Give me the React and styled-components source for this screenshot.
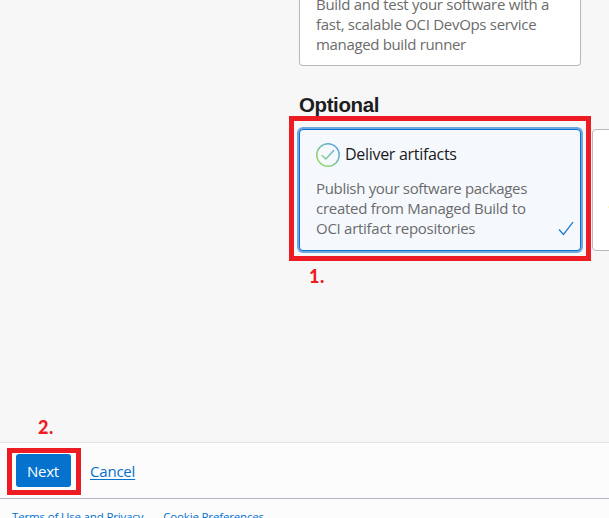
import React from 'react';
import styled, { createGlobalStyle } from 'styled-components';

const Global = createGlobalStyle`
  * { box-sizing: border-box; }
  body { margin: 0; background: #f7f7f7; font-family: "Open Sans", "Noto Sans", sans-serif; }
`;
const Page = styled.div`
  width: 609px; height: 518px; overflow: hidden;
  display: flex; flex-direction: column;
`;
const Content = styled.main`
  height: 442px; flex: none; padding-left: 299px; position: relative; overflow: hidden;
`;
const CardRow = styled.div`
  display: flex; gap: 11px;
`;
const Card = styled.section`
  width: 282px; height: 122px; flex: none; padding: 13px 16px 0;
  border: 1px solid ${p => (p.$selected ? '#0572ce' : '#b6b9be')};
  border-radius: 4px;
  background: ${p => (p.$selected ? '#f5f9fe' : '#fff')};
  box-shadow: ${p => (p.$selected ? '0 0 0 2px #73a5df' : 'none')};
  position: relative;
`;
const ClippedCard = styled(Card)`
  height: 66px; padding: 0 16px 11px; border-top: 0; border-radius: 0 0 4px 4px;
  display: flex; align-items: flex-end;
`;
const Description = styled.div`
  color: #6b6b6b; font-size: 15px; line-height: 20px;
`;
const Line = styled.div`
  white-space: nowrap; width: max-content; letter-spacing: ${p => p.$spacing || 0}px;
`;
const Heading = styled.h2`
  margin: 26px 0 9px; height: 28px; letter-spacing: -0.4px;
  font: bold 20.5px/25px "Liberation Sans", Arial, sans-serif; color: #1d1d1d;
`;
const CardTitle = styled.div`
  display: flex; align-items: center; gap: 5px; height: 24px; margin-bottom: 11px;
  font-size: 16px; line-height: 24px; color: #1a1a1a;
  svg { display: block; flex: none; }
`;
const TitleText = styled.span`
  margin-top: -3px; white-space: nowrap; letter-spacing: -0.3px;
`;
const Tick = styled.svg`
  position: absolute; right: 6px; bottom: 14px;
`;
const Dot = styled.i`
  position: absolute; left: 15px; top: 76px; width: 1px; height: 2px; background: #fff6c4;
`;
const Outline = styled.div`
  position: absolute; border: 5px solid #ed1c24;
  left: ${p => p.$x}px; top: ${p => p.$y}px; width: ${p => p.$w}px; height: ${p => p.$h}px;
  pointer-events: none;
`;
const StepMark = styled.span`
  position: absolute; left: ${p => p.$x}px; top: ${p => p.$y}px;
  color: #ed1c24; font: 900 18px/22px Lato, "Open Sans", sans-serif; letter-spacing: 0.5px;
`;
const ActionBar = styled.div`
  height: 57px; flex: none; display: flex; align-items: flex-start; gap: 19px;
  padding: 11px 16px 0; background: #fcfcfc;
  border-top: 1px solid #e4e4e4; border-bottom: 1px solid #b1b7c0;
  position: relative;
`;
const NextButton = styled.button`
  width: 55px; height: 33px; padding: 1px 1px 0 0; border: 0; border-radius: 3px;
  background: #0572ce; color: #fff; font: 15px/32px "Open Sans", sans-serif; letter-spacing: -0.25px;
`;
const CancelLink = styled.a`
  color: #0572ce; font-size: 15px; line-height: 34px; letter-spacing: -0.2px;
  text-decoration: underline; text-underline-offset: 2px; text-decoration-thickness: 1px;
`;
const Footer = styled.footer`
  height: 19px; flex: none; overflow: hidden; display: flex; gap: 20px;
  padding: 9px 0 0 12px; background: #fcfcfc;
`;
const FooterLink = styled.a`
  color: #0572ce; font-size: 11.5px; line-height: 17px; white-space: nowrap;
  letter-spacing: -0.16px;
`;

export default function App() {
  return (
    <Page>
      <Global />
      <Content>
        <ClippedCard>
          <Description>
            <Line $spacing={-0.29}>Build and test your software with a</Line>
            <Line $spacing={-0.3}>fast, scalable OCI DevOps service</Line>
            <Line $spacing={-0.34}>managed build runner</Line>
          </Description>
        </ClippedCard>
        <Heading>Optional</Heading>
        <CardRow>
          <Card $selected>
            <CardTitle>
              <svg width="24" height="24" viewBox="0 0 24 24" fill="none" stroke="url(#ring)" strokeWidth="1.5">
                <defs>
                  <linearGradient id="ring" gradientUnits="userSpaceOnUse" x1="3" y1="21" x2="21" y2="3">
                    <stop offset="0" stopColor="#9edb62" />
                    <stop offset="1" stopColor="#5aa5e6" />
                  </linearGradient>
                </defs>
                <circle cx="12" cy="12" r="11.2" />
                <path d="M5.8 12.2 9.8 16 18 7.2" />
              </svg>
              <TitleText>Deliver artifacts</TitleText>
            </CardTitle>
            <Description>
              <Line $spacing={-0.32}>Publish your software packages</Line>
              <Line $spacing={-0.28}>created from Managed Build to</Line>
              <Line $spacing={-0.28}>OCI artifact repositories</Line>
            </Description>
            <Tick width="16" height="15" viewBox="0 0 16 15" fill="none" stroke="#1c7bd2" strokeWidth="1.3">
              <path d="M1 8.5 5.5 13.5 15 1.2" />
            </Tick>
          </Card>
          <Card><Dot /></Card>
        </CardRow>
        <Outline $x={289} $y={116} $w={302} $h={145} />
        <StepMark $x={309} $y={265}>1.</StepMark>
        <StepMark $x={38} $y={416}>2.</StepMark>
      </Content>
      <ActionBar>
        <NextButton>Next</NextButton>
        <CancelLink>Cancel</CancelLink>
        <Outline $x={7} $y={5} $w={74} $h={47} />
      </ActionBar>
      <Footer>
        <FooterLink>Terms of Use and Privacy</FooterLink>
        <FooterLink>Cookie Preferences</FooterLink>
      </Footer>
    </Page>
  );
}
